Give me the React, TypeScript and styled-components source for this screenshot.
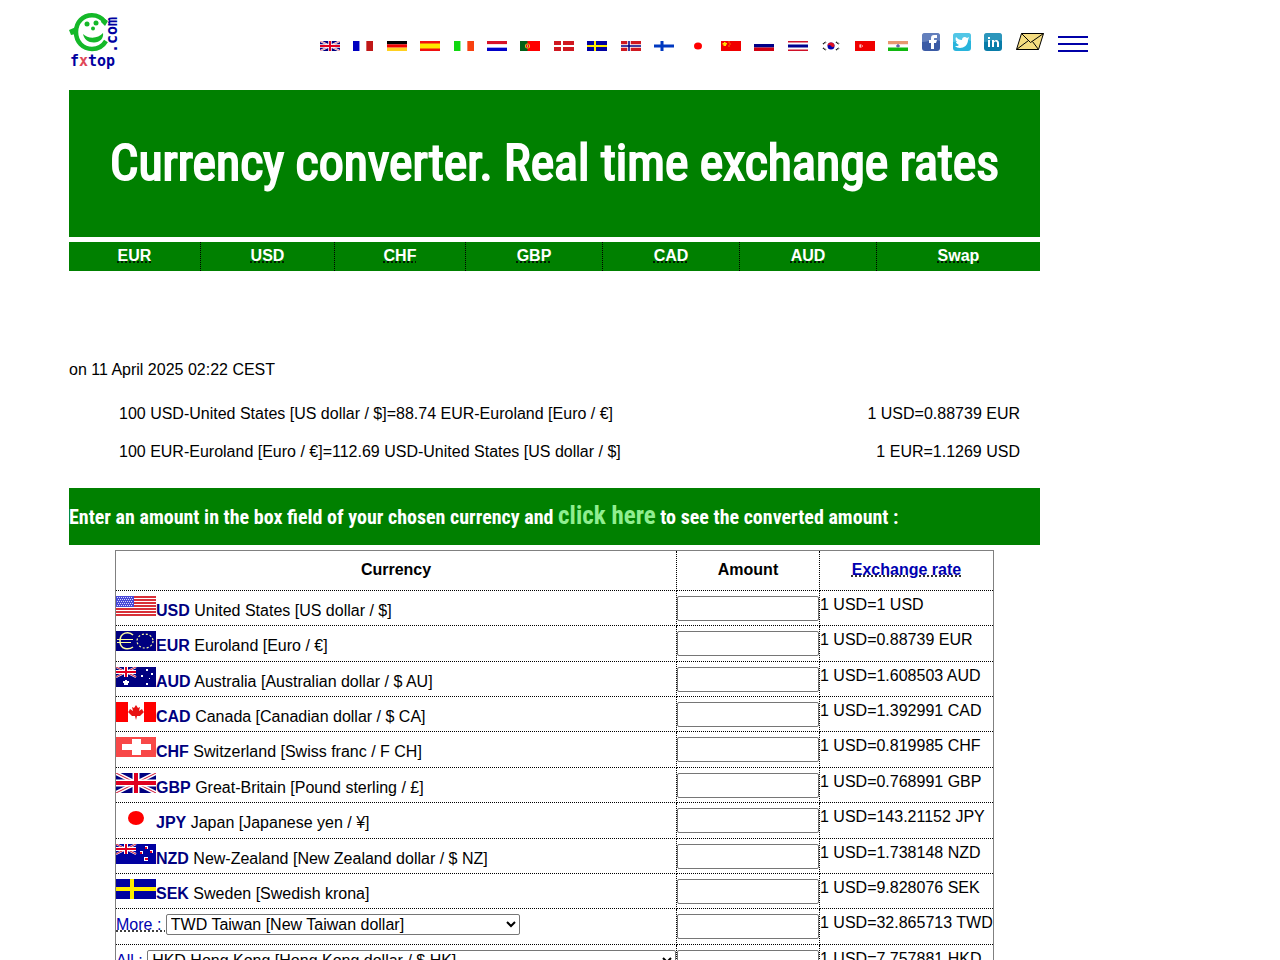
import React from "react";
import styled, { createGlobalStyle } from "styled-components";

const GlobalStyle = createGlobalStyle`
  body {
    margin: 0;
    background: #fff;
    color: #000;
    font: 16px/18px "Liberation Sans", Arial, sans-serif;
  }
`;

const UnionJack = () => (
  <>
    <path fill="#000080" d="M0 0h40v20H0z" />
    <path stroke="#fff" strokeWidth="4" d="M0 0l40 20M40 0L0 20" />
    <path stroke="#d01030" strokeWidth="1" d="M0 0l40 20M40 0L0 20" />
    <path stroke="#fff" strokeWidth="7" d="M20 0v20M0 10h40" />
    <path stroke="#e00020" strokeWidth="4" d="M20 0v20M0 10h40" />
  </>
);

const Canton = () => (
  <>
    <path stroke="#fff" strokeWidth="2" d="M0 0l20 10M20 0L0 10" />
    <path stroke="#d01030" d="M0 0l20 10M20 0L0 10" />
    <path stroke="#fff" strokeWidth="4" d="M10 0v10M0 5h20" />
    <path stroke="#e00020" strokeWidth="2" d="M10 0v10M0 5h20" />
  </>
);

const bars = (direction: "h" | "v", colours: string[]) =>
  colours.map((c, i) =>
    direction === "h" ? (
      <rect key={i} x="0" width="40" y={(20 / colours.length) * i} height={20 / colours.length} fill={c} />
    ) : (
      <rect key={i} y="0" height="20" x={(40 / colours.length) * i} width={40 / colours.length} fill={c} />
    )
  );

const nordic = (field: string, cross: string, width: number, inner?: string) => (
  <>
    <path fill={field} d="M0 0h40v20H0z" />
    <path stroke={cross} strokeWidth={width} d="M16 0v20M0 10h40" />
    {inner && <path stroke={inner} strokeWidth="3" d="M16 0v20M0 10h40" />}
  </>
);

const flags: Record<string, React.ReactNode> = {
  English: <UnionJack />,
  Français: bars("v", ["#0000c0", "#fff", "#c01818"]),
  Deutsch: bars("h", ["#000", "#f00000", "#ffd020"]),
  Español: (
    <>
      <path fill="#f01010" d="M0 0h40v20H0z" />
      <path fill="#ffe800" d="M0 5h40v10H0z" />
    </>
  ),
  Italiano: bars("v", ["#10d810", "#fff", "#f84010"]),
  Nederlands: bars("h", ["#d81028", "#fff", "#0000c8"]),
  Português: (
    <>
      <path fill="#ff0000" d="M0 0h40v20H0z" />
      <path fill="#006018" d="M0 0h15v20H0z" />
      <circle cx="15" cy="10" r="5" fill="#e8c820" />
      <path fill="#e01010" d="M12 7h6v6h-6z" />
      <path fill="#fff" d="M14 9h2v2h-2z" />
    </>
  ),
  Dansk: nordic("#d01820", "#fff", 4),
  Svenska: nordic("#0000a0", "#ffee00", 4),
  Norsk: nordic("#d01820", "#fff", 7, "#000080"),
  Suomi: nordic("#fff", "#0038c0", 6),
  日本語: (
    <>
      <path fill="#fff" d="M0 0h40v20H0z" />
      <ellipse cx="22" cy="10" rx="8" ry="7" fill="#ff0000" />
    </>
  ),
  中文: (
    <>
      <path fill="#f00000" d="M0 0h40v20H0z" />
      <path fill="#ffe000" d="M6 2h3v2h3v3h-2v3H5V7H3V4h3zM15 1h2v2h-2zM17 5h2v2h-2zM15 9h2v2h-2z" />
    </>
  ),
  Русский: (
    <>
      <path fill="#fff" d="M0 0h40v7H0z" />
      <path fill="#000088" d="M0 6h40v7H0z" />
      <path fill="#d00010" d="M0 13h40v7H0z" />
    </>
  ),
  ไทย: (
    <>
      <path fill="#d01028" d="M0 0h40v20H0z" />
      <path fill="#fff" d="M0 3h40v14H0z" />
      <path fill="#000090" d="M0 7h40v6H0z" />
    </>
  ),
  한국어: (
    <>
      <path fill="#fff" d="M0 0h40v20H0z" />
      <circle cx="20" cy="10" r="7" fill="#0000b0" />
      <path fill="#e01020" d="M13 10a7 7 0 0 1 14 0c-2 3-5 3-7 0s-5-3-7 0z" />
      <path stroke="#000" strokeWidth="3" strokeDasharray="2 1" d="M4 6l6-4M30 2l6 4M4 14l6 4M30 18l6-4" />
    </>
  ),
  Türkçe: (
    <>
      <path fill="#f00000" d="M0 0h40v20H0z" />
      <path fill="#fff" d="M9 7h4v2h-2v2h2v2H9zM14 9h2v2h-2z" />
    </>
  ),
  हिन्दी: (
    <>
      <path fill="#e89870" d="M0 0h40v7H0z" />
      <path fill="#fff" d="M0 7h40v6H0z" />
      <path fill="#10b810" d="M0 13h40v7H0z" />
      <path stroke="#303090" strokeWidth="2" d="M20 6v7M16 10h8" />
    </>
  ),
  USD: (
    <>
      <path fill="#fff" d="M0 0h40v20H0z" />
      <path stroke="#d83038" strokeWidth="2" d="M0 1h40M0 4h40M0 7h40M0 10h40M0 13h40M0 16h40M0 19h40" />
      <path fill="#4848d8" d="M0 0h18v11H0z" />
      <path stroke="#d8d8ff" strokeDasharray="1 1" d="M1 1.5h16M2 3.500h15M1 5.500h16M2 7.500h15M1 9.500h16" />
    </>
  ),
  EUR: (
    <>
      <path fill="#000080" d="M0 0h40v20H0z" />
      <path stroke="#ffffa0" strokeWidth="1.500" fill="none" d="M17 4C13 0 4 1 4 10s9 9 13 6" />
      <path stroke="#ffffa0" d="M1 8.5h16M1 11.5h14" />
      <ellipse cx="29" cy="10" rx="8" ry="7" fill="none" stroke="#ffffa0" strokeWidth="1.200" strokeDasharray="2 2" />
    </>
  ),
  AUD: (
    <>
      <path fill="#000080" d="M0 0h40v20H0z" />
      <Canton />
      <path fill="#fff" d="M9 13h2v1h2v2h-1v2H8v-2H7v-2h2zM30 2h2v2h-2zM25 8h2v2h-2zM35 6h2v2h-2zM33 11h1v1h-1zM30 16h2v2h-2z" />
    </>
  ),
  CAD: (
    <>
      <path fill="#fff" d="M0 0h40v20H0z" />
      <path fill="#ff0000" d="M0 0h12v20H0zM28 0h12v20H28z" />
      <path fill="#e81010" d="M20 3l2 3 2-1-1 4 3-2 1 2 1 1-4 4h-3l-1 4-1-4h-3l-4-4 1-1 1-2 3 2-1-4 2 1z" />
    </>
  ),
  CHF: (
    <>
      <path fill="#f84848" d="M0 0h40v20H0z" />
      <path fill="#fff" d="M16 2h9v5h10v6H25v5h-9v-5H6V7h10z" />
    </>
  ),
  GBP: <UnionJack />,
  JPY: (
    <>
      <path fill="#fff" d="M0 0h40v20H0z" />
      <ellipse cx="20" cy="10" rx="8" ry="7" fill="#ff0000" />
    </>
  ),
  NZD: (
    <>
      <path fill="#0000a0" d="M0 0h40v20H0z" />
      <Canton />
      <path fill="#fff" d="M29 2h3v3h-3zM24 7h3v3h-3zM34 6h3v3h-3zM28 13h4v4h-4z" />
      <path fill="#e00020" d="M29 3h2v2h-2zM24 8h2v2h-2zM34 7h2v2h-2zM29 14h3v2h-3z" />
    </>
  ),
  SEK: nordic("#0000a0", "#ffee00", 4),
};

const languages = [
  "English", "Français", "Deutsch", "Español", "Italiano", "Nederlands",
  "Português", "Dansk", "Svenska", "Norsk", "Suomi", "日本語", "中文",
  "Русский", "ไทย", "한국어", "Türkçe", "हिन्दी",
];

const FlagSvg = styled.svg<{ $small?: boolean }>`
  width: ${(p) => (p.$small ? 20 : 40)}px;
  height: ${(p) => (p.$small ? 10 : 20)}px;
`;

const Flag = ({ code, small }: { code: string; small?: boolean }) => (
  <FlagSvg $small={small} viewBox="0 0 40 20" fill="none" aria-hidden="true">
    {flags[code]}
  </FlagSvg>
);

const Header = styled.header`
  display: flex;
  align-items: flex-start;
  gap: 201px;
  padding: 13px 192px 20px 69px;
`;

const LogoLink = styled.a`
  display: block;
  width: 50px;
  height: 57px;
  flex: none;
`;

const LogoSvg = styled.svg`
  display: block;
  width: 50px;
  height: 57px;
  overflow: visible;
`;

const Tools = styled.div`
  flex: 1;
  display: flex;
  align-items: flex-end;
  gap: 14px;
  height: 38px;
`;

const Languages = styled.nav`
  flex: 1;
  display: flex;
  justify-content: space-between;
`;

const Social = styled.div`
  display: flex;
  gap: 13px;
`;

const IconLink = styled.a`
  display: block;
  line-height: 0;
`;

const MenuButton = styled.button`
  display: flex;
  flex-direction: column;
  justify-content: space-between;
  width: 30px;
  height: 16px;
  margin: 0 0 -1px;
  padding: 0;
  border: 0;
  background: none;
`;

const MenuLine = styled.span`
  display: block;
  width: 100%;
  height: 2px;
  background: #0000a8;
`;

const Main = styled.main`
  padding: 0 240px 0 69px;
`;

const Title = styled.h1`
  margin: 0 0 5px;
  padding: 43px 0 44px;
  background: #008000;
  color: #fff;
  text-align: center;
  font: 400 50px/60px "Roboto Condensed", Roboto, sans-serif;
  -webkit-text-stroke: 2px #fff;
`;

const Shortcuts = styled.nav`
  display: grid;
  grid-template-columns: 132fr 134fr 131fr 137fr 137fr 137fr 163fr;
  background: #008000;
`;

const Shortcut = styled.div`
  padding: 5px 0 6px;
  text-align: center;
  font-weight: bold;
  &:not(:last-child) {
    border-right: 1px dotted #000;
  }
`;

const DottedLink = styled.a<{ $light?: boolean }>`
  color: ${(p) => (p.$light ? "#fff" : "#0000b0")};
  text-decoration: underline dotted #000;
`;

const Stamp = styled.p`
  margin: 90px 0 26px;
`;

const Results = styled.div`
  display: flex;
  flex-direction: column;
  gap: 20px;
  margin: 0 20px 27px 50px;
`;

const Result = styled.div`
  display: flex;
  justify-content: space-between;
`;

const Prompt = styled.h2`
  margin: 0 0 5px;
  padding: 14px 0 13px;
  background: #008000;
  color: #fff;
  font: bold 20px/30px "Roboto Condensed", Roboto, sans-serif;
`;

const ClickHere = styled.a`
  color: #90ee90;
  font-size: 25px;
  line-height: 0;
  text-decoration: none;
`;

const Rates = styled.table`
  margin: 0 46px;
  width: calc(100% - 92px);
  border: 1px solid #808080;
  border-collapse: collapse;
  table-layout: fixed;
`;

const CurrencyCol = styled.col``;
const AmountCol = styled.col`
  width: 143px;
`;
const RateCol = styled.col`
  width: 174px;
`;

const HeadCell = styled.th`
  height: 37px;
  padding: 0 0 2px;
  border: 1px dotted #000;
`;

const Row = styled.tr`
  height: 35px;
  &:nth-child(5n + 2),
  &:nth-child(5n) {
    height: 36px;
  }
`;

const Cell = styled.td`
  padding: 5px 0 0;
  border: 1px dotted #000;
  vertical-align: top;
  white-space: nowrap;
`;

const CurrencyLine = styled.label`
  display: block;
  line-height: 24px;
  & b {
    color: #000080;
  }
`;

const AmountInput = styled.input`
  display: block;
  box-sizing: border-box;
  width: 100%;
  height: 25px;
  margin: 0;
  padding: 1px 2px;
  border: 1px solid #767676;
  border-radius: 2px;
  font: inherit;
`;

const PickLine = styled.div`
  display: flex;
  line-height: 21px;
  white-space: pre;
`;

const Picker = styled.select<{ $wide?: boolean }>`
  ${(p) => (p.$wide ? "flex: 1; min-width: 0;" : "width: 354px;")}
  height: 21px;
  margin: 0;
  border: 1px solid #767676;
  border-radius: 2px;
  background-color: #fff;
  color: #000;
  font: 16px "Liberation Sans", Arial, sans-serif;
`;

const Logo = () => (
  <LogoSvg viewBox="0 0 50 57" fill="none" aria-hidden="true">
    <path stroke="#14b828" strokeWidth="4.500" d="M36 9C33 5 28 2.300 23 2.300 14 2.300 7 9 7 19s7 17 16 17c6 0 11-3 14-8" />
    <path fill="#14b828" d="M7 14l-7 3 2 5 5-1zM33 4l6 4-3 5-4-4z" />
    <circle cx="18" cy="11" r="2.500" fill="#14b828" />
    <circle cx="27" cy="10" r="2.500" fill="#14b828" />
    <circle cx="24" cy="15.500" r="2" fill="#14b828" />
    <path fill="#14b828" d="M14 21c5 5 15 5 20-1 1 5-3 9.500-9 9.500S15 26 14 21z" />
    <g fill="#0000a0" fontFamily="DejaVu Sans Mono, monospace" fontWeight="bold" fontSize="15">
      <text x="1" y="53">
        f<tspan fill="#e04858">x</tspan>top
      </text>
      <text transform="translate(48 40) rotate(-90)">.com</text>
    </g>
  </LogoSvg>
);

const Facebook = () => (
  <svg width="18" height="18" viewBox="0 0 18 18" aria-hidden="true">
    <rect width="18" height="18" rx="3" fill="#3b5ba5" />
    <path fill="#7e98cc" d="M3 0h12a3 3 0 0 1 3 3v5C12 5 6 9 0 9V3a3 3 0 0 1 3-3z" opacity=".6" />
    <path fill="#fff" d="M9 16v-6H7V7h2V5c0-2 1-3 3-3h3v3h-2c-1 0-1 0-1 2h3l-1 3h-2v6z" />
  </svg>
);

const Twitter = () => (
  <svg width="18" height="18" viewBox="0 0 18 18" aria-hidden="true">
    <rect width="18" height="18" rx="3" fill="#28b4dc" />
    <path fill="#7cd8f0" d="M3 0h12a3 3 0 0 1 3 3v5C12 5 6 9 0 9V3a3 3 0 0 1 3-3z" opacity=".5" />
    <path fill="#fff" d="M3 4c2 2 3 3 6 3 0-3 3-4 5-2l2-1-1 3c0 5-4 8-8 8-2 0-4-1-5-2 2 0 3 0 4-1-2-1-3-2-3-3h1C3 8 2 6 3 4z" />
  </svg>
);

const LinkedIn = () => (
  <svg width="18" height="18" viewBox="0 0 18 18" aria-hidden="true">
    <rect width="18" height="18" rx="3" fill="#087ca8" />
    <path fill="#50b0d0" d="M3 0h12a3 3 0 0 1 3 3v5C12 5 6 9 0 9V3a3 3 0 0 1 3-3z" opacity=".5" />
    <path fill="#fff" d="M4 7h2v7H4zM4 4h2v2H4zM8 7h2v1c2-2 5-1 5 2v4h-2v-4c0-2-3-2-3 0v4H8z" />
  </svg>
);

const Envelope = () => (
  <svg width="28" height="18" viewBox="0 0 28 18" fill="none" aria-hidden="true">
    <path fill="#f4dc80" stroke="#000" d="M5.500.5h22l-5 16H.5z" />
    <path stroke="#000" d="M5.500.5l9 9 13-9M.5 16.500l12-9M22.500 16.500l-6-8" />
  </svg>
);

const shortcuts = ["EUR", "USD", "CHF", "GBP", "CAD", "AUD", "Swap"];

const results = [
  ["100 USD-United States [US dollar / $]=88.74 EUR-Euroland [Euro / €]", "1 USD=0.88739 EUR"],
  ["100 EUR-Euroland [Euro / €]=112.69 USD-United States [US dollar / $]", "1 EUR=1.1269 USD"],
];

const currencies = [
  ["USD", "United States [US dollar / $]", "1"],
  ["EUR", "Euroland [Euro / €]", "0.88739"],
  ["AUD", "Australia [Australian dollar / $ AU]", "1.608503"],
  ["CAD", "Canada [Canadian dollar / $ CA]", "1.392991"],
  ["CHF", "Switzerland [Swiss franc / F CH]", "0.819985"],
  ["GBP", "Great-Britain [Pound sterling / £]", "0.768991"],
  ["JPY", "Japan [Japanese yen / ¥]", "143.21152"],
  ["NZD", "New-Zealand [New Zealand dollar / $ NZ]", "1.738148"],
  ["SEK", "Sweden [Swedish krona]", "9.828076"],
];

const pickers = [
  { label: "More : ", option: "TWD Taiwan [New Taiwan dollar]", rate: "1 USD=32.865713 TWD", wide: false },
  { label: "All : ", option: "HKD Hong Kong [Hong Kong dollar / $ HK]", rate: "1 USD=7.757881 HKD", wide: true },
];

export default function App() {
  return (
    <>
      <GlobalStyle />
      <Header>
        <LogoLink href="#" aria-label="fxtop.com">
          <Logo />
        </LogoLink>
        <Tools>
          <Languages aria-label="Languages">
            {languages.map((name) => (
              <IconLink key={name} href="#" aria-label={name}>
                <Flag code={name} small />
              </IconLink>
            ))}
          </Languages>
          <Social>
            <IconLink href="#" aria-label="Facebook"><Facebook /></IconLink>
            <IconLink href="#" aria-label="Twitter"><Twitter /></IconLink>
            <IconLink href="#" aria-label="LinkedIn"><LinkedIn /></IconLink>
          </Social>
          <IconLink href="#" aria-label="Email"><Envelope /></IconLink>
          <MenuButton type="button" aria-label="Menu">
            <MenuLine />
            <MenuLine />
            <MenuLine />
          </MenuButton>
        </Tools>
      </Header>
      <Main>
        <Title>Currency converter. Real time exchange rates</Title>
        <Shortcuts aria-label="Currencies">
          {shortcuts.map((name) => (
            <Shortcut key={name}>
              <DottedLink $light href="#">{name}</DottedLink>
            </Shortcut>
          ))}
        </Shortcuts>
        <Stamp>on 11 April 2025 02:22 CEST</Stamp>
        <Results>
          {results.map(([sum, rate]) => (
            <Result key={rate}>
              <span>{sum}</span>
              <span>{rate}</span>
            </Result>
          ))}
        </Results>
        <Prompt>
          Enter an amount in the box field of your chosen currency and{" "}
          <ClickHere href="#">click here</ClickHere> to see the converted amount :
        </Prompt>
        <Rates>
          <colgroup>
            <CurrencyCol />
            <AmountCol />
            <RateCol />
          </colgroup>
          <thead>
            <tr>
              <HeadCell scope="col">Currency</HeadCell>
              <HeadCell scope="col">Amount</HeadCell>
              <HeadCell scope="col"><DottedLink href="#">Exchange rate</DottedLink></HeadCell>
            </tr>
          </thead>
          <tbody>
            {currencies.map(([code, name, rate]) => (
              <Row key={code}>
                <Cell>
                  <CurrencyLine htmlFor={code}>
                    <Flag code={code} />
                    <b>{code}</b> {name}
                  </CurrencyLine>
                </Cell>
                <Cell><AmountInput id={code} type="text" /></Cell>
                <Cell>1 USD={rate} {code}</Cell>
              </Row>
            ))}
            {pickers.map((p) => (
              <Row key={p.label}>
                <Cell>
                  <PickLine>
                    <DottedLink href="#">{p.label}</DottedLink>
                    <Picker $wide={p.wide} aria-label={p.label}>
                      <option>{p.option}</option>
                    </Picker>
                  </PickLine>
                </Cell>
                <Cell><AmountInput type="text" aria-label={p.label + "amount"} /></Cell>
                <Cell>{p.rate}</Cell>
              </Row>
            ))}
          </tbody>
        </Rates>
      </Main>
    </>
  );
}
